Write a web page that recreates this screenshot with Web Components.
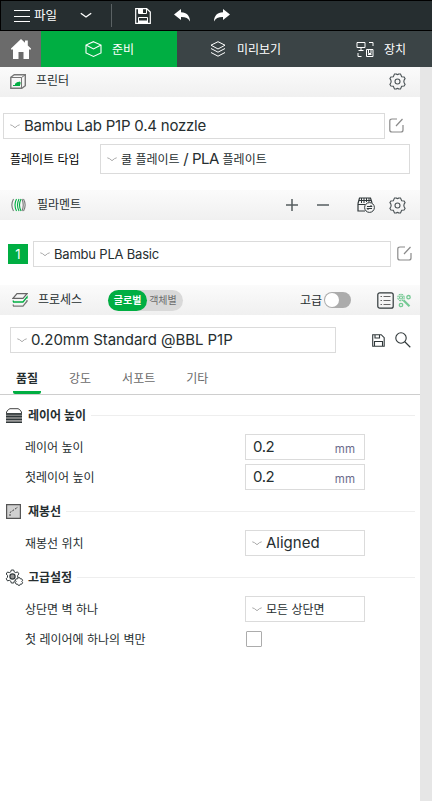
<!DOCTYPE html>
<html lang="ko">
<head>
<meta charset="UTF-8">
<title>P1P</title>
<style>
body {
  margin: 0;
  width: 432px;
  height: 801px;
  overflow: hidden;
  background: #e6e6e6;
  color: #262e30;
  font-family: Inter, "Noto Sans CJK KR", sans-serif;
  font-size: 12px;
}
</style>
</head>
<body>
<slicer-app></slicer-app>

<script>
const icons = {
  menu: [16, 14, '<path d="M0 1.500h16M0 7.500h16M0 12.500h16" stroke="#fff" stroke-width="1.200"/>'],
  down: [12, 7, '<path d="M.8 1.200 6 5l5.200-3.800" stroke="currentColor" stroke-width="1.400"/>'],
  caret: [10, 5, '<path d="M.3.800Q2.300 1 5 3.700 7.700 1 9.700.8" stroke="#aaa"/>'],
  save: [16, 16, '<path d="M.7.700h11L15.300 4v11.300H.7z" stroke="#fff" stroke-width="1.200"/><path d="M3.500 1v4.500h8V1M3.500 15V9.500h9V15" stroke="#fff"/><path d="M4 1h4v4H4zM4 12.500h8V15H4z" fill="#fff"/>'],
  undo: [17, 13, '<path d="M0 5.400 7 0v3.300c5.800.1 9 3.700 9 9.200-1.500-3.200-4.400-4.600-9-4.500v3z" fill="#fff"/>'],
  redo: [17, 13, '<path d="M17 5.400 10 0v3.300C4.200 3.400 1 7 1 12.500 2.500 9.300 5.400 7.900 10 8v3z" fill="#fff"/>'],
  home: [20, 20, '<path d="M10 0 0 9.500V10.500H2V20H7.500V13H12.500V20H18V10.500H20V9.500L16.800 6.400V1.500H14V3.800z" fill="#fff"/>'],
  cube: [17, 16, '<path d="M8.500.7 16 4v8l-7.500 3.400L1 12V4zM1 4l7.500 4L16 4" stroke="#fff" stroke-width="1.100"/>'],
  layers: [16, 16, '<path d="m8 .7 7 3.500L8 8 1 4.200zM1 7.500l7 3.700 7-3.700M1 11.500l7 3.700 7-3.700" stroke="#fff"/>'],
  device: [18, 17, '<path d="M1 1.500h8v5H1zM5 7v2M2.500 9.500h5M13 1.500h4V5M2 12v3.500h3.500M10.500 8.500h6.500v7h-6.500zM12.500 8.500v4h2.500v-4M12 13.500h3.500" stroke="#fff"/>'],
  printer: [16, 15, '<path d="M.8 3.300 4.300.7h11v11l-3.500 2.500H.8z" stroke="#777" stroke-width="1.400"/><path d="M1 3.500h10.500V14M11.500 3.500 15 1" stroke="#777"/><path d="M3 11.500h7M5 10.500q1-2 5-2.500v2.500z" fill="#00ae42" stroke="#00ae42"/>'],
  spool: [15, 14, '<path d="M2.500 1Q-.8 7 2.500 13M12.500 1q3.300 6 0 12M11 1q2.500 6 0 12" stroke="#777" stroke-width="1.100"/><path d="M5.500 1q-3 6 0 12M8 1Q5 7 8 13M10 1q-3 6 0 12" stroke="#00ae42" stroke-width="1.100"/>'],
  process: [16, 14, '<path d="M5 .7h10l-4 4.600H1z" stroke="#666" stroke-width="1.200"/><path d="M1 7.500 1.600 9H11l4-5v1.500" stroke="#00ae42" stroke-width="1.300"/><path d="m1 11.500.6 1.700H11l4-5V7" stroke="#777" stroke-width="1.300"/>'],
  gear: [17, 17, '<path d="M5.500 1h1.800q1.200 1.200 2.400 0h1.800l1.200 2.800 2.400.2 1 1.700q-2.500 2.800 0 5.600l-1 1.700-2.400.2L11.500 16H9.700q-1.200-1.200-2.400 0H5.500l-1.200-2.800L1.900 13l-1-1.700q2.500-2.800 0-5.600l1-1.700 2.400-.2z" stroke="#4b5356" stroke-width="1.100"/><circle cx="8.500" cy="8.500" r="2.500" stroke="#4b5356" stroke-width="1.100"/>'],
  edit: [15, 15, '<path d="M8 1H3Q.8 1 .8 3v9q0 2 2.200 2h9q2 0 2-2V7M7 8l6.500-7" stroke="#8a8a8a" stroke-width="1.200"/>'],
  plus: [12, 12, '<path d="M0 6h12M6 0v12" stroke="#555d5f" stroke-width="1.500"/>'],
  minus: [12, 12, '<path d="M0 6h12" stroke="#555d5f" stroke-width="1.500"/>'],
  ams: [18, 16, '<path d="M1 6.500 2.500 1h11L15 6M1 6.500V14h7M1 7.500h7" stroke="#30383a" stroke-width="1.200"/><path d="M4.500 1v5M7 1v5M9.500 1v4M12 1v4M2 3.500h12" stroke="#30383a"/><circle cx="12.500" cy="10.500" r="4.900" fill="#f5f5f5" stroke="#30383a"/><path d="M10 9.500h5L13.500 8M15 11.500h-5l1.500 1.500" stroke="#30383a"/>'],
  list: [17, 17, '<rect x=".8" y=".8" width="15.400" height="15.400" rx="2" stroke="#30383a" stroke-width="1.200"/><path d="M3.500 4.500H5M6.500 4.500h7M3.500 8.500H5M6.500 8.500h7M3.500 12.500H5M6.500 12.500h7" stroke="#666"/>'],
  parts: [14, 15, '<g stroke="#74c993"><circle cx="4" cy="4.500" r="3.200" stroke-width="1.200" stroke-dasharray="1.800 .7"/><circle cx="4" cy="4.500" r="1.500" stroke-width="1.200"/><circle cx="11.500" cy="4.200" r="1.700" stroke-width="1.300"/><circle cx="4" cy="12" r="1.700" stroke-width="1.300"/><path d="m6.500 7.200 6 6" stroke-width="2.200"/></g>'],
  floppy: [13, 13, '<path d="M.7.700h8.500l3 3v8.600H.7zM3 1v3h4.500V1M2.500 12V7.500h8V12" stroke="#30383a" stroke-width="1.100"/>'],
  search: [16, 16, '<circle cx="6" cy="6" r="5.200" stroke="#30383a" stroke-width="1.100"/><path d="m9.800 9.800 5.500 5.400" stroke="#30383a" stroke-width="1.200"/>'],
  height: [16, 15, '<path d="M.5 5.500V4Q2.500.7 4 .7h8q1.500 0 3.500 3.300v1.500z" fill="#fff" stroke="#444"/><path d="M0 5.500h16V15H0z" fill="#999"/><path d="M0 6h16M0 8.500h16M0 11.300h16M0 14.300h16" stroke="#30383a" stroke-width="1.300"/>'],
  seam: [15, 15, '<path d="M.6.600h13.800v13.800H.6z" fill="#d0d0d0" stroke="#555" stroke-width="1.200"/><path d="M4 12V8.500L12 3" stroke="#444" stroke-dasharray="2 1.200"/>'],
  gears: [19, 17, '<path d="M6.300 1h2.400l.5 1.800 1.500.8 1.800-.7 1.400 2-1.200 1.500v2l1 1.200-1.300 2.200-1.700-.5-1.500.9-.5 1.800H6.300l-.5-1.800-1.500-.9-1.800.6-1.300-2.200 1.300-1.300v-2L1.200 5l1.300-2 1.800.6 1.500-.8z" stroke="#30383a"/><circle cx="7.500" cy="7.500" r="2.600" fill="#999" stroke="#30383a" stroke-width="1.200"/><path d="m13.200 8.700 1.600 0 .6 1.200 1.300-.1.900 1.500-.8 1.200.8 1.200-.9 1.500-1.300-.1-.6 1.200h-1.600l-.7-1.200-1.300.1-.9-1.500.8-1.200-.8-1.200.9-1.500 1.300.1z" fill="#fff" stroke="#30383a"/>']
}

class UiIcon extends HTMLElement {
  constructor() {
    super()
    this.attachShadow({ mode: 'open' })
  }

  connectedCallback() {
    const [w, h, shape] = icons[this.getAttribute('name')]
    this.shadowRoot.innerHTML = `
    <style>
    :host { display: block; flex: none; width: ${w}px; height: ${h}px; }
    svg { display: block; }
    </style>
    <svg width="${w}" height="${h}" viewBox="0 0 ${w} ${h}" fill="none">${shape}</svg>
    `
  }
}
customElements.define('ui-icon', UiIcon)

class TitleBar extends HTMLElement {
  constructor() {
    super()
    this.attachShadow({ mode: 'open' }).innerHTML = `
    <style>
    :host {
      display: flex;
      align-items: center;
      box-sizing: border-box;
      height: 31px;
      padding-left: 13px;
      border: 1px solid #000;
      border-right: 0;
      background: #262e30;
      color: #fff;
      font-size: 12.5px;
    }
    span { margin-left: 4px; width: 46px; line-height: 18px; }
    i { width: 1px; height: 23px; margin: 0 23px 0 19px; background: #5b6264; }
    .undo { margin: 0 22px 0 23px; }
    </style>
    <ui-icon name="menu"></ui-icon>
    <span>파일</span>
    <ui-icon name="down"></ui-icon>
    <i></i>
    <ui-icon name="save"></ui-icon>
    <ui-icon class="undo" name="undo"></ui-icon>
    <ui-icon name="redo"></ui-icon>
    `
  }
}
customElements.define('title-bar', TitleBar)

class MainTabs extends HTMLElement {
  constructor() {
    super()
    this.attachShadow({ mode: 'open' }).innerHTML = `
    <style>
    :host {
      display: grid;
      grid-template-columns: 41px 136px 136px 119px;
      height: 36px;
      background: #3b4446;
      color: #fff;
    }
    div { display: flex; align-items: center; gap: 11px; box-sizing: border-box; }
    span { padding-bottom: 1px; }
    .home { background: #6b6b6b; padding-left: 11px; }
    .active { background: #00ae42; padding-left: 44px; gap: 10px; }
    .preview { padding-left: 33px; }
    .device { padding-left: 43px; gap: 10px; }
    </style>
    <div class="home"><ui-icon name="home"></ui-icon></div>
    <div class="active"><ui-icon name="cube"></ui-icon><span>준비</span></div>
    <div class="preview"><ui-icon name="layers"></ui-icon><span>미리보기</span></div>
    <div class="device"><ui-icon name="device"></ui-icon><span>장치</span></div>
    `
  }
}
customElements.define('main-tabs', MainTabs)

class PanelHeader extends HTMLElement {
  constructor() {
    super()
    this.attachShadow({ mode: 'open' })
  }

  connectedCallback() {
    this.shadowRoot.innerHTML = `
    <style>
    :host {
      display: flex;
      align-items: center;
      box-sizing: border-box;
      height: 30px;
      padding: 0 14px 0 10px;
      background: linear-gradient(#fbfbfb, #f0f0f0);
    }
    .icon { width: 26px; }
    span { line-height: 18px; white-space: nowrap; }
    .tools { flex: 1; display: flex; align-items: center; justify-content: flex-end; }
    </style>
    <div class="icon"><ui-icon name="${this.getAttribute('icon')}"></ui-icon></div>
    <span>${this.getAttribute('label')}</span>
    <div class="tools"><slot></slot></div>
    `
  }
}
customElements.define('panel-header', PanelHeader)

class SelectBox extends HTMLElement {
  constructor() {
    super()
    this.attachShadow({ mode: 'open' }).innerHTML = `
    <style>
    :host {
      display: flex;
      align-items: center;
      gap: 4px;
      box-sizing: border-box;
      height: 26px;
      padding-left: 6px;
      border: 1px solid #dbdbdb;
      background: #fff;
      font-size: 15px;
      line-height: 20px;
      white-space: nowrap;
    }
    </style>
    <ui-icon name="caret"></ui-icon>
    <span><slot></slot></span>
    `
  }
}
customElements.define('select-box', SelectBox)

class NumberField extends HTMLElement {
  constructor() {
    super()
    this.attachShadow({ mode: 'open' })
  }

  connectedCallback() {
    this.shadowRoot.innerHTML = `
    <style>
    :host {
      display: flex;
      align-items: center;
      justify-content: space-between;
      box-sizing: border-box;
      height: 26px;
      padding: 0 9px 0 7px;
      border: 1px solid #dbdbdb;
      background: #fff;
      font-size: 15px;
      line-height: 20px;
      letter-spacing: -.4px;
    }
    .unit { color: #6b6b8c; font-size: 11.5px; padding-top: 4px; letter-spacing: 0; }
    </style>
    <span><slot></slot></span>
    <span class="unit">${this.getAttribute('unit')}</span>
    `
  }
}
customElements.define('number-field', NumberField)

class ModeSwitch extends HTMLElement {
  constructor() {
    super()
    this.attachShadow({ mode: 'open' }).innerHTML = `
    <style>
    :host {
      display: flex;
      width: 75px;
      height: 21px;
      border-radius: 11px;
      background: #d9d9d9;
      color: #6b6b6b;
      font-size: 10px;
      line-height: 20px;
      white-space: nowrap;
    }
    b { width: 39px; border-radius: 11px; background: #00ae42; color: #fff; text-align: center; }
    span { margin-left: 2px; }
    </style>
    <b>글로벌</b><span>객체별</span>
    `
  }
}
customElements.define('mode-switch', ModeSwitch)

class ToggleSwitch extends HTMLElement {
  constructor() {
    super()
    this.attachShadow({ mode: 'open' }).innerHTML = `
    <style>
    :host {
      display: block;
      box-sizing: border-box;
      width: 27px;
      height: 16px;
      padding: 1px;
      border-radius: 8px;
      background: #acacac;
    }
    i { display: block; width: 14px; height: 14px; border-radius: 50%; background: #fff; }
    </style>
    <i></i>
    `
  }
}
customElements.define('toggle-switch', ToggleSwitch)

class SettingTabs extends HTMLElement {
  constructor() {
    super()
    this.attachShadow({ mode: 'open' }).innerHTML = `
    <style>
    :host {
      display: flex;
      gap: 25px;
      box-sizing: border-box;
      height: 30px;
      padding-left: 13px;
      border-bottom: 1px solid #cecece;
      color: #6b6b6b;
      line-height: 28px;
      white-space: nowrap;
    }
    span { padding: 0 3px; }
    .active {
      box-sizing: border-box;
      width: 28px;
      border-bottom: 3px solid #00ae42;
      border-radius: 2px;
      color: #262e30;
      font-weight: bold;
    }
    </style>
    <span class="active">품질</span><span>강도</span><span>서포트</span><span>기타</span>
    `
  }
}
customElements.define('setting-tabs', SettingTabs)

class SettingGroup extends HTMLElement {
  constructor() {
    super()
    this.attachShadow({ mode: 'open' })
  }

  connectedCallback() {
    this.shadowRoot.innerHTML = `
    <style>
    :host { display: block; }
    header {
      display: flex;
      align-items: center;
      box-sizing: border-box;
      height: 36px;
      padding: 2px 5px 0 6px;
    }
    .icon { width: 22px; }
    ui-icon[name="gears"] { margin-left: -1px; }
    b { padding-top: 1px; white-space: nowrap; line-height: 18px; }
    hr { flex: 1; height: 1px; margin: 0 0 0 5px; border: 0; background: #eee; }
    </style>
    <header>
      <div class="icon"><ui-icon name="${this.getAttribute('icon')}"></ui-icon></div>
      <b>${this.getAttribute('label')}</b>
      <hr>
    </header>
    <slot></slot>
    `
  }
}
customElements.define('setting-group', SettingGroup)

class SettingRow extends HTMLElement {
  constructor() {
    super()
    this.attachShadow({ mode: 'open' })
  }

  connectedCallback() {
    this.shadowRoot.innerHTML = `
    <style>
    :host {
      display: grid;
      grid-template-columns: 220px 120px;
      align-items: center;
      height: 30px;
      padding-left: 25px;
    }
    span { padding-bottom: 2px; }
    </style>
    <span>${this.getAttribute('label')}</span>
    <slot></slot>
    `
  }
}
customElements.define('setting-row', SettingRow)

class CheckBox extends HTMLElement {
  constructor() {
    super()
    this.attachShadow({ mode: 'open' }).innerHTML = `
    <style>
    :host {
      display: block;
      box-sizing: border-box;
      width: 16px;
      height: 16px;
      margin-left: 1px;
      border: 1px solid #acacac;
      border-radius: 1px;
    }
    </style>
    `
  }
}
customElements.define('check-box', CheckBox)

class SlicerApp extends HTMLElement {
  constructor() {
    super()
    this.attachShadow({ mode: 'open' })
  }

  connectedCallback() {
    this.render()
  }

  render() {
    this.shadowRoot.innerHTML = `
    <style>
    :host { display: flex; flex-direction: column; height: 801px; }
    main { flex: 1; width: 420px; background: #fff; }
    .row { display: flex; align-items: center; }
    .printer { padding: 16px 0 0 3px; gap: 4px; }
    .printer select-box { width: 382px; letter-spacing: -.22px; }
    .printer ui-icon { margin-bottom: 2px; }
    .plate { padding: 5px 0 16px 10px; }
    .plate .name { width: 90px; padding-bottom: 2px; color: #000; }
    .plate select-box { width: 310px; height: 30px; letter-spacing: -.5px; }
    .kr { font-size: 12px; letter-spacing: 0; }
    .filament { padding: 21px 0 18px 8px; gap: 5px; }
    .filament b {
      width: 20px;
      height: 20px;
      background: #00ae42;
      color: #fff;
      font-weight: normal;
      font-size: 13px;
      line-height: 20px;
      text-align: center;
    }
    .filament select-box { width: 358px; font-size: 13px; letter-spacing: -.2px; }
    .filament ui-icon { margin: 0 0 2px 1px; }
    .preset { padding: 12px 0 12px 10px; }
    .preset select-box { width: 326px; letter-spacing: -.05px; }
    .preset .save { margin: 0 10px 0 36px; }
    .plus { margin-right: 19px; }
    .minus { margin-right: 28px; }
    .ams { margin-right: 14px; }
    .proc { padding-left: 12px; }
    .fila { padding-left: 11px; }
    .first { padding-bottom: 2px; }
    mode-switch { margin-right: auto; margin-left: 26px; }
    .adv { margin: 0 2px 2px 0; }
    .list { margin: 0 3px 0 26px; }
    .parts { margin-right: -5px; }
    setting-tabs { margin-bottom: 1px; }
    </style>
    <title-bar></title-bar>
    <main-tabs></main-tabs>
    <main>
      <panel-header class="first" icon="printer" label="프린터"><ui-icon name="gear"></ui-icon></panel-header>
      <div class="row printer">
        <select-box>Bambu Lab P1P 0.4 nozzle</select-box>
        <ui-icon name="edit"></ui-icon>
      </div>
      <div class="row plate">
        <span class="name">플레이트 타입</span>
        <select-box><span class="kr">쿨 플레이트</span> / PLA <span class="kr">플레이트</span></select-box>
      </div>

      <panel-header class="fila" icon="spool" label="필라멘트">
        <ui-icon class="plus" name="plus"></ui-icon>
        <ui-icon class="minus" name="minus"></ui-icon>
        <ui-icon class="ams" name="ams"></ui-icon>
        <ui-icon name="gear"></ui-icon>
      </panel-header>
      <div class="row filament">
        <b>1</b>
        <select-box>Bambu PLA Basic</select-box>
        <ui-icon name="edit"></ui-icon>
      </div>

      <panel-header class="proc" icon="process" label="프로세스">
        <mode-switch></mode-switch>
        <span class="adv">고급</span>
        <toggle-switch></toggle-switch>
        <ui-icon class="list" name="list"></ui-icon>
        <ui-icon class="parts" name="parts"></ui-icon>
      </panel-header>
      <div class="row preset">
        <select-box>0.20mm Standard @BBL P1P</select-box>
        <ui-icon class="save" name="floppy"></ui-icon>
        <ui-icon name="search"></ui-icon>
      </div>

      <setting-tabs></setting-tabs>
      <setting-group icon="height" label="레이어 높이">
        <setting-row label="레이어 높이"><number-field unit="mm">0.2</number-field></setting-row>
        <setting-row label="첫레이어 높이"><number-field unit="mm">0.2</number-field></setting-row>
      </setting-group>
      <setting-group icon="seam" label="재봉선">
        <setting-row label="재봉선 위치"><select-box>Aligned</select-box></setting-row>
      </setting-group>
      <setting-group icon="gears" label="고급설정">
        <setting-row label="상단면 벽 하나"><select-box><span class="kr">모든 상단면</span></select-box></setting-row>
        <setting-row label="첫 레이어에 하나의 벽만"><check-box></check-box></setting-row>
      </setting-group>
    </main>
    `
  }
}
customElements.define('slicer-app', SlicerApp)
</script>
</body>
</html>
